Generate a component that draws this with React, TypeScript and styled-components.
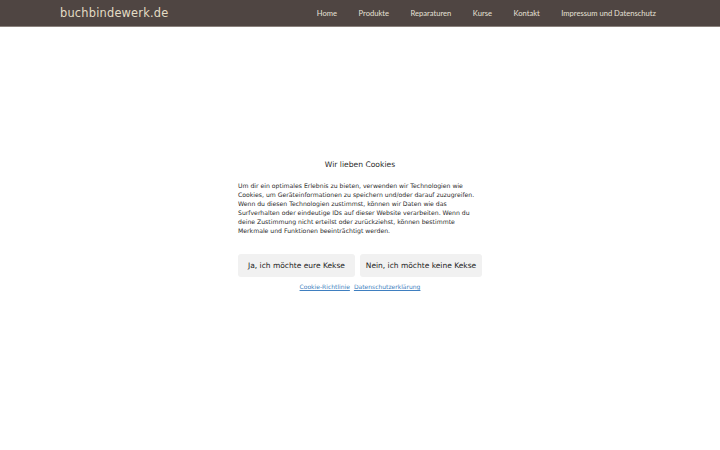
import styled, { createGlobalStyle } from "styled-components";

const GlobalStyle = createGlobalStyle`
  html, body {
    margin: 0;
    padding: 0;
    background: #ffffff;
  }
  body {
    font-family: "DejaVu Sans", sans-serif;
  }
`;

const Page = styled.div`
  width: 720px;
  height: 450px;
  display: flex;
  flex-direction: column;
`;

const Header = styled.header`
  height: 27px;
  background: #4f4542;
  border-bottom: 1px solid #8a817c;
  box-sizing: border-box;
  display: flex;
  align-items: center;
  justify-content: space-between;
  padding: 0 64px 0 60px;
`;

const Logo = styled.a`
  font-family: "DejaVu Sans", sans-serif;
  font-size: 11.4px;
  letter-spacing: 0.2px;
  color: #e3dcc4;
  text-decoration: none;
  padding-bottom: 1px;
`;

const Nav = styled.nav`
  display: flex;
  gap: 21.5px;
`;

const NavLink = styled.a`
  font-family: "Lato", sans-serif;
  font-size: 7.6px;
  color: #e6e0d6;
  text-decoration: none;
`;

const Main = styled.main`
  flex: 1;
  display: flex;
  justify-content: center;
  padding-top: 133px;
`;

const Dialog = styled.section`
  width: 244px;
  display: flex;
  flex-direction: column;
  align-items: stretch;
`;

const Title = styled.h2`
  margin: 0 0 12px;
  font-size: 7.6px;
  font-weight: normal;
  color: #2a2a2a;
  text-align: center;
`;

const Text = styled.p`
  margin: 0;
  font-size: 6.15px;
  line-height: 9px;
  color: #2a2a2a;
`;

const Buttons = styled.div`
  display: flex;
  gap: 5px;
  margin-top: 19px;
`;

const Button = styled.button<{ $width: number }>`
  width: ${({ $width }) => $width}px;
  height: 23px;
  border: none;
  border-radius: 3px;
  background: #f1f1f1;
  color: #222;
  font-family: "DejaVu Sans", sans-serif;
  font-size: 7.5px;
  padding: 0;
  cursor: pointer;
`;

const Links = styled.div`
  display: flex;
  justify-content: center;
  gap: 4px;
  margin-top: 6px;
`;

const Link = styled.a`
  font-size: 6px;
  color: #3f7fc0;
  text-decoration: underline;
`;

const navItems = [
  "Home",
  "Produkte",
  "Reparaturen",
  "Kurse",
  "Kontakt",
  "Impressum und Datenschutz",
];

export default function App() {
  return (
    <>
      <GlobalStyle />
      <Page>
        <Header>
          <Logo href="#">buchbindewerk.de</Logo>
          <Nav>
            {navItems.map((item) => (
              <NavLink key={item} href="#">
                {item}
              </NavLink>
            ))}
          </Nav>
        </Header>
        <Main>
          <Dialog>
            <Title>Wir lieben Cookies</Title>
            <Text>
              Um dir ein optimales Erlebnis zu bieten, verwenden wir Technologien wie
              Cookies, um Geräteinformationen zu speichern und/oder darauf zuzugreifen.
              Wenn du diesen Technologien zustimmst, können wir Daten wie das
              Surfverhalten oder eindeutige IDs auf dieser Website verarbeiten. Wenn du
              deine Zustimmung nicht erteilst oder zurückziehst, können bestimmte
              Merkmale und Funktionen beeinträchtigt werden.
            </Text>
            <Buttons>
              <Button $width={117}>Ja, ich möchte eure Kekse</Button>
              <Button $width={122}>Nein, ich möchte keine Kekse</Button>
            </Buttons>
            <Links>
              <Link href="#">Cookie-Richtlinie</Link>
              <Link href="#">Datenschutzerklärung</Link>
            </Links>
          </Dialog>
        </Main>
      </Page>
    </>
  );
}
